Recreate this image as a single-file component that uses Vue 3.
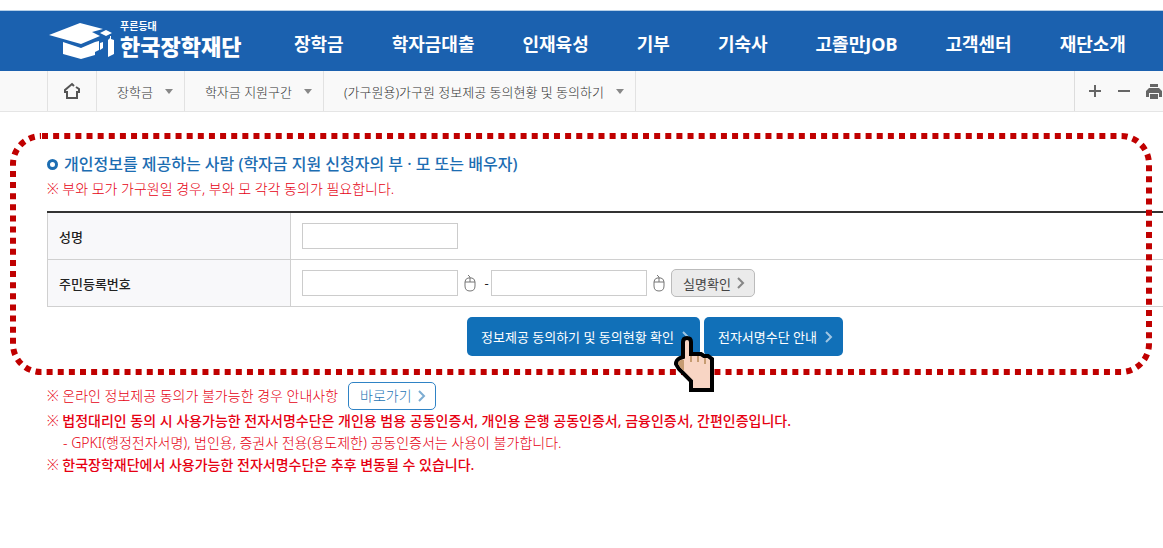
<script setup>
import { ref } from "vue"

const menus = ["장학금", "학자금대출", "인재육성", "기부", "기숙사", "고졸만JOB", "고객센터", "재단소개"]

const crumbs = ["장학금", "학자금 지원구간", "(가구원용)가구원 정보제공 동의현황 및 동의하기"]

const name = ref("")
const idFront = ref("")
const idBack = ref("")
</script>

<template>
  <div class="page">
    <header class="header">
      <a href="#" class="logo">
        <svg class="logo-mark" viewBox="0 0 66 38" width="66" height="38">
          <path d="M0 13 L31 1 L54 7 L43 10 L51 14 L32 22 Z" />
          <path d="M14 20 L32 26 L46 20 V33 L32 37 L14 32 Z" />
          <path d="M51 11 L57 8 L63 11 L57 14 Z" />
          <path d="M46 20 L50 19 V28 L46 30 Z M51 21 L54 20 V26 L51 28 Z" />
          <path d="M59 18 L61 16 V14 H62 V17 L65 18 V32 L59 35 Z" />
        </svg>
        <span class="logo-text">
          <small>푸른등대</small>
          <strong>한국장학재단</strong>
        </span>
      </a>
      <nav class="menu">
        <a v-for="menu in menus" :key="menu" href="#">{{ menu }}</a>
      </nav>
    </header>

    <div class="location">
      <a href="#" class="home" aria-label="홈">
        <svg viewBox="0 0 18 18" width="18" height="18">
          <path d="M11 4 L9 2 L2 8 V10 H4 V16 H14 V10 H16 V7 L13 5" />
        </svg>
      </a>
      <button v-for="crumb in crumbs" :key="crumb" type="button" class="crumb">
        {{ crumb }}<i class="caret"></i>
      </button>
      <div class="tools">
        <button type="button" aria-label="확대">
          <svg viewBox="0 0 14 14" width="14" height="14"><path d="M7 1 V13 M1 7 H13" /></svg>
        </button>
        <button type="button" aria-label="축소">
          <svg viewBox="0 0 14 14" width="14" height="14"><path d="M1 7 H13" /></svg>
        </button>
        <button type="button" aria-label="인쇄">
          <svg class="print" viewBox="0 0 16 16" width="16" height="16">
            <path d="M4 1 H12 V4 H4 Z M3 5 H13 L16 8 V14 H13 V10 H3 V14 H0 V8 Z M4 11 H12 V16 H4 Z" />
          </svg>
        </button>
      </div>
    </div>

    <main>
      <section class="provider">
        <svg class="frame"><rect width="100%" height="100%" rx="28" /></svg>
        <div class="content">
          <h2>개인정보를 제공하는 사람 (학자금 지원 신청자의 부 · 모 또는 배우자)</h2>
          <p class="note">※ 부와 모가 가구원일 경우, 부와 모 각각 동의가 필요합니다.</p>

          <table>
            <tbody>
              <tr>
                <th scope="row"><label for="name">성명</label></th>
                <td><input id="name" v-model="name" type="text"></td>
              </tr>
              <tr>
                <th scope="row"><label for="id-front">주민등록번호</label></th>
                <td>
                  <div class="fields">
                    <input id="id-front" v-model="idFront" type="text">
                    <svg class="mouse" viewBox="0 0 12 18" width="12" height="18">
                      <path d="M4 1 L6 3 V8 M1 8 H11 M4 4 H8 Q11 5 11 8 V12 Q11 17 6 17 Q1 17 1 12 V8 Q1 5 4 4 Z" />
                    </svg>
                    <span class="dash">-</span>
                    <input v-model="idBack" type="text" aria-label="주민등록번호 뒷자리">
                    <svg class="mouse" viewBox="0 0 12 18" width="12" height="18">
                      <path d="M4 1 L6 3 V8 M1 8 H11 M4 4 H8 Q11 5 11 8 V12 Q11 17 6 17 Q1 17 1 12 V8 Q1 5 4 4 Z" />
                    </svg>
                    <button type="button" class="btn check">
                      실명확인
                      <svg class="arrow" viewBox="0 0 8 12" width="8" height="12"><path d="M1 1 L6 6 L1 11" /></svg>
                    </button>
                  </div>
                </td>
              </tr>
            </tbody>
          </table>

          <div class="actions">
            <div class="agree">
              <button type="button" class="btn primary">
                정보제공 동의하기 및 동의현황 확인
                <svg class="arrow" viewBox="0 0 8 12" width="8" height="12"><path d="M1 1 L6 6 L1 11" /></svg>
              </button>
              <svg class="hand" viewBox="0 0 40 56" width="40" height="56">
                <path
                  class="skin"
                  d="M9 21 V6 Q9 2 13 2 Q17 2 17 6 V18 H27 L30 20 H34 L38 23 V54 H17 V45 L5 33 L2 28 Q2 24 6 22 Z"
                />
                <path class="shade" d="M10 24 V35 L6 31 L4 28 Q4 25 7 24 Z" />
                <path class="finger" d="M17 20 V26 M24 20 V26 M31 22 V28" />
              </svg>
            </div>
            <button type="button" class="btn primary">
              전자서명수단 안내
              <svg class="arrow" viewBox="0 0 8 12" width="8" height="12"><path d="M1 1 L6 6 L1 11" /></svg>
            </button>
          </div>
        </div>
      </section>

      <section class="guide">
        <p class="offline">
          ※ 온라인 정보제공 동의가 불가능한 경우 안내사항
          <button type="button" class="btn go">
            바로가기
            <svg class="arrow" viewBox="0 0 8 12" width="8" height="12"><path d="M1 1 L6 6 L1 11" /></svg>
          </button>
        </p>
        <p>※ <b>법정대리인 동의 시 사용가능한 전자서명수단은 개인용 범용 공동인증서, 개인용 은행 공동인증서, 금융인증서, 간편인증입니다.</b></p>
        <p class="sub">- GPKI(행정전자서명), 법인용, 증권사 전용(용도제한) 공동인증서는 사용이 불가합니다.</p>
        <p>※ <b>한국장학재단에서 사용가능한 전자서명수단은 추후 변동될 수 있습니다.</b></p>
      </section>
    </main>
  </div>
</template>

<style>
body {
  margin: 0;
  background: #fff;
}
</style>

<style scoped>
.page {
  padding-top: 10px;
  overflow: hidden;
  font-family: "Noto Sans", "Noto Sans CJK KR", sans-serif;
  font-size: 13px;
  color: #222;
  white-space: nowrap;
}

button,
input {
  font: inherit;
  box-sizing: border-box;
  margin: 0;
}

a {
  color: inherit;
  text-decoration: none;
}

svg {
  display: block;
  flex: none;
  fill: none;
}

h2,
p {
  margin: 0;
}

.header {
  display: flex;
  align-items: center;
  height: 60px;
  padding-left: 49px;
  border-top: 1px solid #b5cfe8;
  background: #1b61af;
  color: #fff;
}

.logo {
  display: flex;
  align-items: center;
  gap: 5px;
}

.logo-mark {
  fill: #fff;
}

.logo-text {
  display: flex;
  flex-direction: column;
  width: 121px;
  padding-bottom: 4px;
}

.logo-text small {
  font-size: 10px;
  font-weight: bold;
  line-height: 14px;
}

.logo-text strong {
  font-size: 22px;
  font-weight: 900;
  line-height: 26px;
}

.menu {
  display: flex;
  gap: 48px;
  padding-left: 53px;
  padding-top: 4px;
  font-size: 18px;
  font-weight: bold;
}

.location {
  display: flex;
  height: 40px;
  padding-left: 47px;
  border-bottom: 1px solid #e5e5e5;
  background: #f9f9f9;
  color: #555;
}

.home {
  display: flex;
  align-items: center;
  justify-content: center;
  width: 48px;
  border-left: 1px solid #e2e2e2;
  border-right: 1px solid #e2e2e2;
}

.home svg {
  stroke: #555;
  stroke-width: 2;
}

.crumb {
  display: flex;
  align-items: center;
  gap: 12px;
  padding: 0 11px 0 20px;
  border: 0;
  border-right: 1px solid #e2e2e2;
  background: none;
  color: #333;
  font-weight: 300;
}

.caret {
  border: 4px solid transparent;
  border-top: 5px solid #888;
  border-bottom: 0;
}

.tools {
  display: flex;
  align-items: center;
  gap: 15px;
  margin-left: auto;
  padding: 0 1px 0 13px;
  border-left: 1px solid #ddd;
}

.tools button {
  padding: 0;
  border: 0;
  background: none;
}

.tools svg {
  stroke: #666;
  stroke-width: 2;
}

.tools .print {
  fill: #666;
  stroke: none;
}

.provider {
  position: relative;
  margin-top: 21px;
  padding: 19px 0 19px;
}

.frame {
  position: absolute;
  z-index: 1;
  top: 3px;
  left: 13px;
  width: calc(100% - 27px);
  height: calc(100% - 6px);
  overflow: visible;
  pointer-events: none;
}

.frame rect {
  stroke: #c00000;
  stroke-width: 6;
  stroke-dasharray: 6 5.13;
  stroke-dashoffset: -1;
}

/* the form is wider than the window and runs off its right side */
.content {
  margin-left: 47px;
  margin-right: -100px;
}

h2 {
  display: flex;
  align-items: center;
  gap: 6px;
  font-size: 16px;
  font-weight: 500;
  line-height: 24px;
  color: #1c6db2;
}

h2::before {
  content: "";
  width: 5px;
  height: 5px;
  border: 3px solid #1c6db2;
  border-radius: 50%;
}

.note,
.guide {
  font-size: 14px;
  color: #e60012;
  font-weight: 300;
}

.note {
  line-height: 26px;
}

table {
  width: 100%;
  margin-top: 9px;
  border-collapse: collapse;
  border-top: 2px solid #333;
}

th,
td {
  height: 46px;
  padding: 0 11px;
  border: 1px solid #d0d0d0;
  border-top-width: 0;
  text-align: left;
}

th {
  width: 220px;
  background: #f8f8fa;
  font-weight: 500;
}

input {
  display: block;
  width: 156px;
  height: 26px;
  padding: 0 6px;
  border: 1px solid #ccc;
  background: #fff;
}

.fields {
  display: flex;
  align-items: center;
}

.mouse {
  margin: 0 6px;
  stroke: #777;
}

.dash {
  width: 9px;
  text-align: center;
}

.btn {
  display: flex;
  align-items: center;
  gap: 6px;
  cursor: pointer;
}

.arrow {
  stroke: currentColor;
  stroke-width: 2;
  opacity: 0.6;
}

.check {
  height: 28px;
  padding: 0 9px 0 11px;
  border: 1px solid #bbb;
  border-radius: 5px;
  background: #ebebeb;
  color: #444;
}

.actions {
  display: flex;
  justify-content: center;
  gap: 4px;
  margin-top: 10px;
}

.agree {
  position: relative;
}

.primary {
  height: 39px;
  gap: 8px;
  padding: 0 10px 0 14px;
  border: 0;
  border-radius: 5px;
  background: #1170b8;
  color: #fff;
}

.hand {
  position: absolute;
  z-index: 2;
  top: 19px;
  right: -14px;
}

.skin {
  fill: #f8d5c4;
  stroke: #000;
  stroke-width: 4;
}

.shade {
  fill: #c69c72;
}

.finger {
  stroke: #c69c72;
  stroke-width: 2;
}

.guide {
  padding: 7px 0 0 47px;
  line-height: 22px;
}

.guide b {
  font-weight: 500;
}

.offline {
  display: flex;
  align-items: center;
  gap: 10px;
}

.go {
  height: 28px;
  padding: 0 9px 0 11px;
  border: 1px solid #2f83c5;
  border-radius: 5px;
  background: #fff;
  color: #2776b5;
}

.sub {
  padding-left: 16px;
}
</style>
